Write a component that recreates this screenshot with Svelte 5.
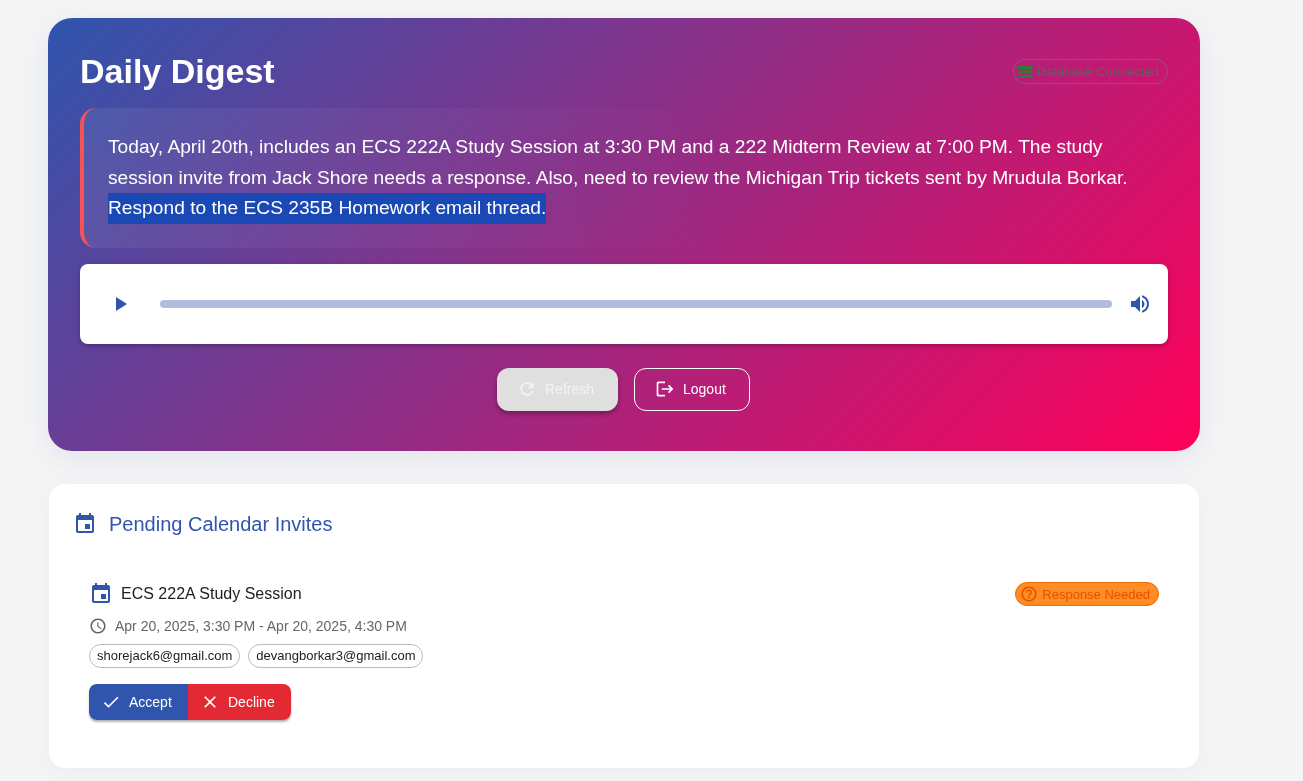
<script>
    const attendees = ['shorejack6@gmail.com', 'devangborkar3@gmail.com'];
    const calendarPath = 'M17 12h-5v5h5v-5zM16 1v2H8V1H6v2H5c-1.11 0-1.99.9-1.99 2L3 19c0 1.1.89 2 2 2h14c1.1 0 2-.9 2-2V5c0-1.1-.9-2-2-2h-1V1h-2zm3 18H5V8h14v11z';
</script>

<main class="page">
    <section class="hero">
        <header class="hero__top">
            <h1>Daily Digest</h1>
            <div class="db-chip">
                <svg viewBox="0 0 24 24" width="18" height="18"><path fill="#2e7d32" d="M2 20h20v-4H2v4zm2-3h2v2H4v-2zM2 4v4h20V4H2zm4 3H4V5h2v2zm-4 7h20v-4H2v4zm2-3h2v2H4v-2z"/></svg>
                <span>Database Connected</span>
            </div>
        </header>

        <div class="summary">
            <p>Today, April 20th, includes an ECS 222A Study Session at 3:30 PM and a 222 Midterm Review at 7:00 PM. The study session invite from Jack Shore needs a response. Also, need to review the Michigan Trip tickets sent by Mrudula Borkar. <span class="selected">Respond to the ECS 235B Homework email thread.</span></p>
        </div>

        <div class="player">
            <svg class="player__play" viewBox="0 0 24 24" width="24" height="24"><path fill="#2f55ad" d="M8 5v14l11-7z"/></svg>
            <div class="player__track"></div>
            <svg class="player__volume" viewBox="0 0 24 24" width="24" height="24"><path fill="#2f55ad" d="M3 9v6h4l5 5V4L7 9H3zm13.5 3c0-1.77-1.02-3.29-2.5-4.03v8.05c1.48-.73 2.5-2.25 2.5-4.02zM14 3.23v2.06c2.89.86 5 3.54 5 6.71s-2.11 5.85-5 6.71v2.06c4.01-.91 7-4.49 7-8.77s-2.99-7.86-7-8.77z"/></svg>
        </div>

        <div class="actions">
            <button class="btn btn--disabled" disabled>
                <svg viewBox="0 0 24 24" width="20" height="20"><path fill="currentColor" d="M17.65 6.35C16.2 4.9 14.21 4 12 4c-4.42 0-7.99 3.58-7.99 8s3.57 8 7.99 8c3.73 0 6.84-2.55 7.73-6h-2.08c-.82 2.33-3.04 4-5.65 4-3.31 0-6-2.69-6-6s2.69-6 6-6c1.66 0 3.14.69 4.22 1.78L13 11h7V4l-2.35 2.35z"/></svg>
                Refresh
            </button>
            <button class="btn btn--outline">
                <svg viewBox="0 0 24 24" width="20" height="20"><path fill="currentColor" d="M17 7l-1.41 1.41L18.17 11H8v2h10.17l-2.58 2.58L17 17l5-5zM4 5h8V3H4c-1.1 0-2 .9-2 2v14c0 1.1.9 2 2 2h8v-2H4V5z"/></svg>
                Logout
            </button>
        </div>
    </section>

    <section class="panel">
        <h2>
            <svg viewBox="0 0 24 24" width="24" height="24"><path fill="#2f55ad" d={calendarPath}/></svg>
            Pending Calendar Invites
        </h2>

        <article class="invite">
            <div class="invite__head">
                <div class="invite__title">
                    <svg viewBox="0 0 24 24" width="24" height="24"><path fill="#2f55ad" d={calendarPath}/></svg>
                    <span>ECS 222A Study Session</span>
                </div>
                <div class="status">
                    <svg viewBox="0 0 24 24" width="18" height="18"><path fill="#e65100" d="M11 18h2v-2h-2v2zm1-16C6.48 2 2 6.48 2 12s4.48 10 10 10 10-4.48 10-10S17.52 2 12 2zm0 18c-4.41 0-8-3.59-8-8s3.59-8 8-8 8 3.59 8 8-3.59 8-8 8zm0-14c-2.21 0-4 1.79-4 4h2c0-1.1.9-2 2-2s2 .9 2 2c0 2-3 1.75-3 5h2c0-2.25 3-2.5 3-5 0-2.21-1.79-4-4-4z"/></svg>
                    <span>Response Needed</span>
                </div>
            </div>

            <div class="invite__time">
                <svg viewBox="0 0 24 24" width="18" height="18"><path fill="#616161" d="M11.99 2C6.47 2 2 6.48 2 12s4.47 10 9.99 10C17.52 22 22 17.52 22 12S17.52 2 11.99 2zM12 20c-4.42 0-8-3.58-8-8s3.58-8 8-8 8 3.58 8 8-3.58 8-8 8zm.5-13H11v6l5.25 3.15.75-1.23-4.5-2.67z"/></svg>
                <span>Apr 20, 2025, 3:30 PM - Apr 20, 2025, 4:30 PM</span>
            </div>

            <div class="invite__people">
                {#each attendees as email}
                    <span class="person">{email}</span>
                {/each}
            </div>

            <div class="group">
                <button class="group__btn group__btn--accept">
                    <svg viewBox="0 0 24 24" width="20" height="20"><path fill="currentColor" d="M9 16.17 4.83 12l-1.42 1.41L9 19 21 7l-1.41-1.41z"/></svg>
                    Accept
                </button>
                <button class="group__btn group__btn--decline">
                    <svg viewBox="0 0 24 24" width="20" height="20"><path fill="currentColor" d="M19 6.41 17.59 5 12 10.59 6.41 5 5 6.41 10.59 12 5 17.59 6.41 19 12 13.41 17.59 19 19 17.59 13.41 12z"/></svg>
                    Decline
                </button>
            </div>
        </article>
    </section>
</main>

<style>
    :global(body) {
        background: #f5f5f5;
        font-family: "Liberation Sans", Arial, sans-serif;
    }

    .page {
        width: 1152px;
        margin-left: 48px;
        padding: 18px 0 13px;
    }

    svg {
        display: block;
        flex: none;
    }

    /* top card */
    .hero {
        height: 433px;
        box-sizing: border-box;
        padding: 32px;
        border-radius: 24px;
        background: linear-gradient(135deg, #2f55ad 0%, #ff0059 100%);
        box-shadow: 0 8px 32px rgba(47, 85, 173, 0.1);
        will-change: transform;
    }

    .hero__top {
        display: flex;
        justify-content: space-between;
        align-items: center;
        height: 42px;
        margin-bottom: 16px;
    }

    h1 {
        margin: 0;
        font-size: 34px;
        line-height: 42px;
        font-weight: 700;
        color: #fff;
    }

    .db-chip {
        display: flex;
        align-items: center;
        gap: 3px;
        box-sizing: border-box;
        height: 25px;
        margin-top: 1px;
        padding: 0 8px 0 2px;
        border: 1px solid rgba(130, 110, 130, 0.6);
        border-radius: 13px;
        font-size: 13px;
        color: #616161;
    }

    .summary {
        box-sizing: border-box;
        height: 140px;
        padding: 24px;
        border-left: 4px solid #f55454;
        border-radius: 16px;
        background: linear-gradient(90deg, rgba(255, 255, 255, 0.07), rgba(255, 255, 255, 0) 60%);
    }

    .summary p {
        margin: 0;
        font-size: 19.2px;
        line-height: 30.7px;
        color: #fff;
    }

    .selected {
        display: inline-block;
        background: #1a48b5;
    }

    .player {
        display: flex;
        align-items: center;
        height: 80px;
        margin-top: 16px;
        padding: 0 16px 0 28px;
        border-radius: 8px;
        background: #fff;
        box-shadow: 0 2px 4px rgba(0, 0, 0, 0.25);
    }

    .player__track {
        flex: 1;
        height: 8px;
        margin: 0 16px 0 28px;
        border-radius: 4px;
        background: #b2bcdf;
    }

    .actions {
        display: flex;
        gap: 16px;
        margin-top: 24px;
        padding-left: 417px;
    }

    .btn {
        display: flex;
        align-items: center;
        gap: 8px;
        box-sizing: border-box;
        height: 43px;
        padding: 0 0 1px 20px;
        border-radius: 12px;
        font: 14px "Liberation Sans", Arial, sans-serif;
        color: #fff;
    }

    .btn--disabled {
        width: 121px;
        border: 0;
        background: #dfdfdf;
        color: #f4f4f4;
        box-shadow: 0 3px 5px rgba(0, 0, 0, 0.3);
    }

    .btn--outline {
        width: 116px;
        border: 1px solid #fff;
        background: transparent;
    }

    /* invites card */
    .panel {
        box-sizing: border-box;
        height: 284px;
        margin: 33px 1px 0;
        padding: 24px 40px 0 24px;
        border-radius: 16px;
        background: #fff;
        box-shadow: 0 4px 20px rgba(47, 85, 173, 0.05);
        will-change: transform;
    }

    h2 {
        display: flex;
        align-items: center;
        gap: 12px;
        margin: 0;
        height: 32px;
        font-size: 20px;
        font-weight: 400;
        color: #2f55ad;
    }

    .invite {
        margin: 41px 0 0 16px;
    }

    .invite__head {
        display: flex;
        justify-content: space-between;
        align-items: flex-start;
    }

    .invite__title {
        display: flex;
        align-items: center;
        gap: 8px;
        margin-top: 1px;
        font-size: 16px;
        color: #212121;
    }

    .status {
        display: flex;
        align-items: center;
        gap: 4px;
        box-sizing: border-box;
        height: 24px;
        margin-top: 1px;
        padding: 0 8px 0 4px;
        border: 1px solid #ed6c02;
        border-radius: 12px;
        background: #ff8c24;
        font-size: 13px;
        color: #e65100;
    }

    .invite__time {
        display: flex;
        align-items: center;
        gap: 8px;
        margin-top: 11px;
        font-size: 14px;
        color: #666;
    }

    .invite__people {
        display: flex;
        gap: 8px;
        margin-top: 9px;
    }

    .person {
        box-sizing: border-box;
        height: 24px;
        padding: 0 7px;
        border: 1px solid #bdbdbd;
        border-radius: 12px;
        font-size: 13px;
        line-height: 22px;
        color: #212121;
    }

    .group {
        display: inline-flex;
        margin-top: 16px;
        border-radius: 8px;
        box-shadow: 0 2px 2px rgba(0, 0, 0, 0.3);
    }

    .group__btn {
        display: flex;
        align-items: center;
        gap: 8px;
        height: 36px;
        padding: 0 0 0 12px;
        border: 0;
        font: 14px "Liberation Sans", Arial, sans-serif;
        color: #fff;
    }

    .group__btn--accept {
        width: 99px;
        background: #2f55ad;
        border-radius: 8px 0 0 8px;
    }

    .group__btn--decline {
        width: 103px;
        background: #e32933;
        border-radius: 0 8px 8px 0;
    }
</style>
